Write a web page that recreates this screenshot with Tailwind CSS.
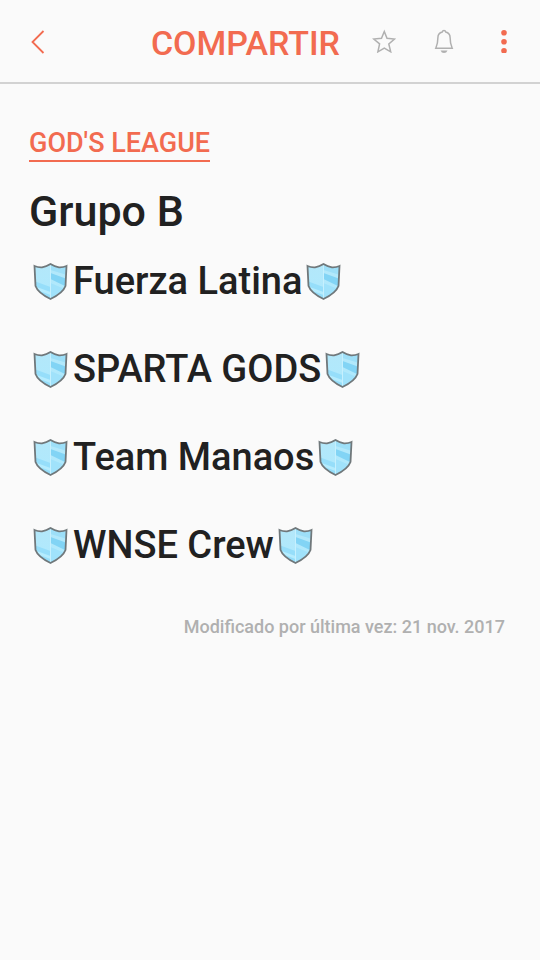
<!DOCTYPE html>
<html lang="es">
<head>
  <meta charset="UTF-8">
  <meta name="viewport" content="width=device-width, initial-scale=1.0">
  <title>God's League</title>
  <script src="https://cdn.jsdelivr.net/npm/@tailwindcss/browser@4"></script>
</head>
<body class="min-h-screen bg-[#fafafa] text-[#212121] font-['Roboto',sans-serif] font-medium">
  <!-- shield used on both sides of every team name -->
  <svg class="absolute size-0" aria-hidden="true">
    <defs>
      <linearGradient id="glass" x1="0" y1="0" x2="0" y2="1">
        <stop offset="0" stop-color="#b4e7f9"/>
        <stop offset="1" stop-color="#aeeafe"/>
      </linearGradient>
      <clipPath id="shield-clip">
        <path d="M5.500 7Q9 8.500 13 8.300Q17.500 7.500 21.500 5Q25.500 7.500 30 8.300Q34 8.500 37.500 7L36.500 27Q34 34 21.500 40Q9 34 6.500 27Z"/>
      </clipPath>
    </defs>
    <symbol id="shield" viewBox="0 0 44 44">
      <g clip-path="url(#shield-clip)">
        <rect width="44" height="44" fill="url(#glass)"/>
        <path d="M21.500 4H38V16L21.500 11Z" fill="#9ddff8"/>
        <path d="M21.500 14L38 20V28L21.500 20Z" fill="#82d4f5"/>
        <path d="M21.500 24L38 31V40H21.500Z" fill="#a0e2fb"/>
        <path d="M5 22L21.500 28V40H5Z" fill="#96defa"/>
        <path d="M5 27L21.500 33V36L5 30Z" fill="#b5ecfe"/>
        <path d="M21.500 5V40" stroke="#c6f0fe" stroke-width="1"/>
      </g>
      <path d="M5.500 7Q9 8.500 13 8.300Q17.500 7.500 21.500 5Q25.500 7.500 30 8.300Q34 8.500 37.500 7L36.500 27Q34 34 21.500 40Q9 34 6.500 27Z" fill="none" stroke="#70787b" stroke-width="1.800"/>
    </symbol>
  </svg>

  <header class="flex items-center h-21 px-6 border-b-2 border-[#d2d2d2] text-[#f26b50]">
    <button type="button" aria-label="Volver" class="flex justify-center w-7">
      <svg class="size-7" viewBox="0 0 28 28" fill="none" stroke="currentColor" stroke-width="1.800">
        <path d="M19.500 4L8.500 15L19.500 26"/>
      </svg>
    </button>
    <button type="button" class="ml-auto text-[34px] leading-10 pt-1">COMPARTIR</button>
    <button type="button" aria-label="Favorito" class="ml-8 text-[#b0b0b0]">
      <svg class="size-6" viewBox="0 0 24 24" fill="none" stroke="currentColor" stroke-width="1.500">
        <path d="M12.300 2.500L15 9.300L22.500 10L16.800 14.900L18.700 22.800L12.300 19L5.900 22.800L7.600 14.900L1.700 10L9.500 9.300Z"/>
      </svg>
    </button>
    <button type="button" aria-label="Recordatorio" class="ml-9 text-[#b0b0b0]">
      <svg class="size-6" viewBox="0 0 24 24" fill="none" stroke="currentColor" stroke-width="1.500">
        <path d="M12 1.500C11 1.500 10.500 2 10.300 2.900C7.500 3.600 5.900 5.800 5.900 8.500C5.900 13 5.500 15.500 3.800 19.200H20.200C18.500 15.500 18.100 13 18.100 8.500C18.100 5.800 16.500 3.600 13.700 2.900C13.500 2 13 1.500 12 1.500Z"/>
        <path d="M8.500 21.400H15.500Q14.500 24 12 24T8.500 21.400Z" fill="currentColor" stroke="none"/>
      </svg>
    </button>
    <button type="button" aria-label="Más opciones" class="ml-9">
      <svg class="size-6" viewBox="0 0 24 24" fill="currentColor">
        <circle cx="12" cy="3.800" r="2.800"/>
        <circle cx="12" cy="12.800" r="2.800"/>
        <circle cx="12" cy="21.800" r="2.800"/>
      </svg>
    </button>
  </header>

  <main class="px-[29px] pt-10">
    <a href="#" class="inline-block pt-0.5 border-b-2 border-[#f26b50] text-[27px] leading-[34px] text-[#f26b50]">GOD'S LEAGUE</a>
    <h1 class="mt-[25px] text-[43px] leading-12">Grupo B</h1>
    <ul class="mt-6 flex flex-col gap-11 text-[38px] leading-11">
      <li class="flex items-center">
        <svg class="size-11" aria-hidden="true"><use href="#shield"/></svg>
        <span>Fuerza Latina</span>
        <svg class="size-11" aria-hidden="true"><use href="#shield"/></svg>
      </li>
      <li class="flex items-center">
        <svg class="size-11" aria-hidden="true"><use href="#shield"/></svg>
        <span>SPARTA GODS</span>
        <svg class="size-11" aria-hidden="true"><use href="#shield"/></svg>
      </li>
      <li class="flex items-center">
        <svg class="size-11" aria-hidden="true"><use href="#shield"/></svg>
        <span>Team Manaos</span>
        <svg class="size-11" aria-hidden="true"><use href="#shield"/></svg>
      </li>
      <li class="flex items-center">
        <svg class="size-11" aria-hidden="true"><use href="#shield"/></svg>
        <span>WNSE Crew</span>
        <svg class="size-11" aria-hidden="true"><use href="#shield"/></svg>
      </li>
    </ul>
    <p class="mt-12 pr-1.5 text-right text-lg leading-6 text-[#b0b0b0]">Modificado por última vez: 21 nov. 2017</p>
  </main>
</body>
</html>
